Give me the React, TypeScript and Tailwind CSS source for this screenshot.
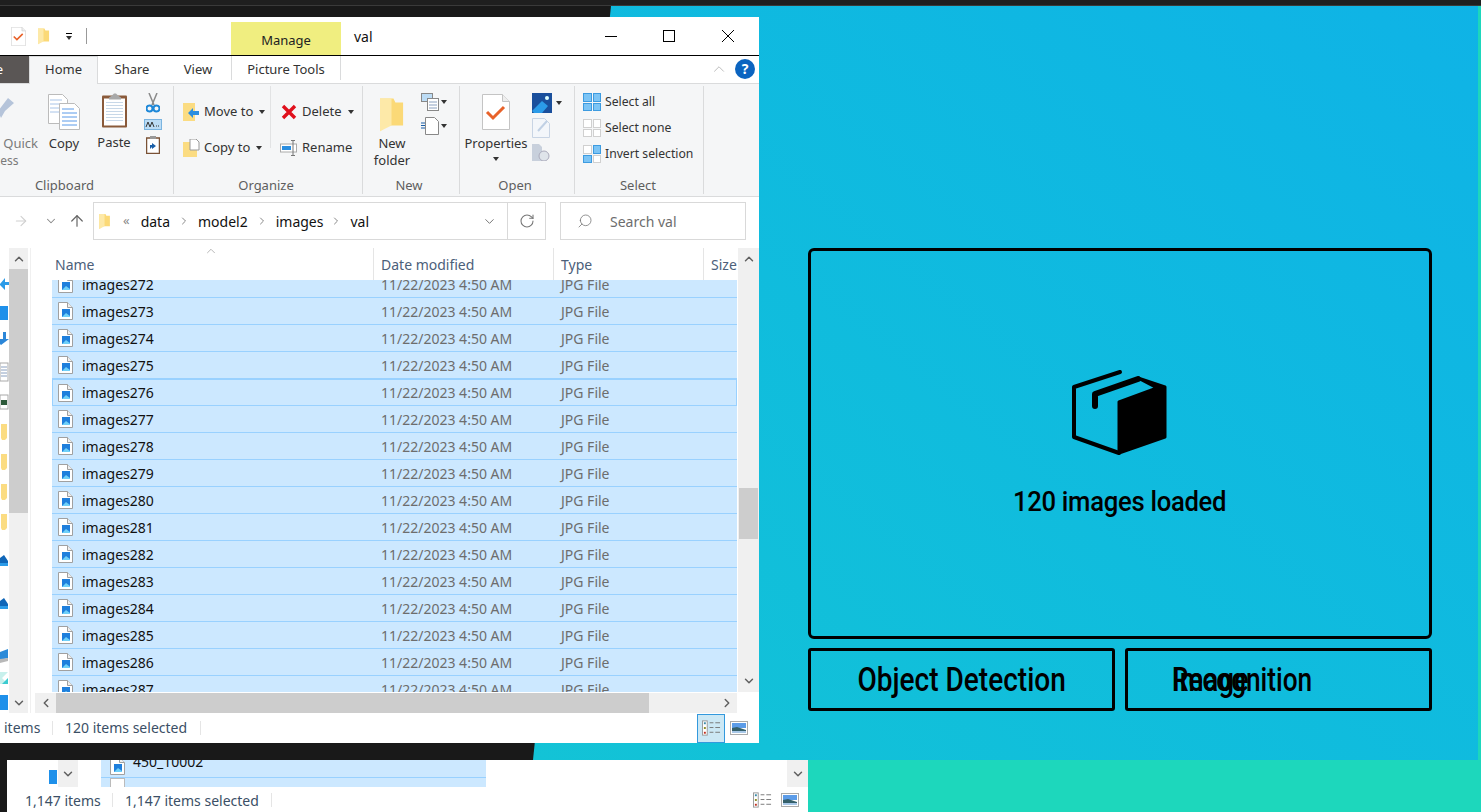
import type { ReactNode } from 'react';
import { ChevronDown, ChevronLeft, ChevronRight, ChevronUp, RotateCw, Search, ArrowUp, ArrowRight } from 'lucide-react';

const files = [272, 273, 274, 275, 276, 277, 278, 279, 280, 281, 282, 283, 284, 285, 286, 287];

function Caret() {
  return <span className="inline-block w-0 h-0 border-x-[3.5px] border-x-transparent border-t-[4px] border-t-[#333]" />;
}

function Folder({ className = '' }: { className?: string }) {
  return (
    <svg viewBox="0 0 13 18" className={className}>
      <path d="M0 1h7l1 2h4v12H4l-4 3z" fill="#fbd977" />
      <path d="M0 1h6v14l-6 3z" fill="#fde9a8" />
    </svg>
  );
}

function JpgIcon() {
  return (
    <svg viewBox="0 0 15 18" className="w-[15px] h-[18px] shrink-0">
      <path d="M.5.5h9l5 5v12H.5z" fill="#fff" stroke="#a0a0a0" />
      <path d="M9.5.5v5h5" fill="#eee" stroke="#a0a0a0" />
      <rect x="4" y="7" width="8" height="8" fill="#1f7fdc" />
      <path d="M4 15l4-4 4 3v1z" fill="#6fd0f8" />
    </svg>
  );
}

function DocCheck({ className = '' }: { className?: string }) {
  return (
    <svg viewBox="0 0 28 36" className={className}>
      <path d="M.5.5h20l7 7v28H.5z" fill="#fff" stroke="#c4c4c4" />
      <path d="M20.5.5v7h7" fill="#eee" stroke="#c4c4c4" />
      <path d="M5 18l6 6 11-11" fill="none" stroke="#e8622a" strokeWidth="3" />
    </svg>
  );
}

function DetailsIcon() {
  return (
    <svg viewBox="0 0 20 16" className="w-[19px] h-[16px]">
      <rect x=".5" y=".5" width="5" height="15" fill="#fff" stroke="#999" />
      <rect x="2" y="2" width="2" height="2" fill="#3a8aa8" />
      <rect x="2" y="7" width="2" height="2" fill="#8a8a20" />
      <rect x="2" y="12" width="2" height="2" fill="#c03020" />
      <path d="M8 2.5h4M14 2.5h5M8 7.5h4M14 7.5h5M8 12.5h4M14 12.5h5" stroke="#777" />
    </svg>
  );
}

function ThumbIcon() {
  return (
    <svg viewBox="0 0 18 14" className="w-[18px] h-[14px]">
      <rect x=".5" y=".5" width="17" height="13" fill="#fff" stroke="#aaa" />
      <rect x="2" y="2" width="14" height="5" fill="#5c9ce8" />
      <path d="M2 7l5-1 9 3v3H2z" fill="#35606a" />
      <rect x="2" y="10" width="14" height="2" fill="#a8c8e8" />
    </svg>
  );
}

function NavIcons() {
  return (
    <svg viewBox="0 0 9 462" className="w-[9px] h-[462px] shrink-0">
      <path d="M0 36l5-6v4h4v3H5v5l-5-5z" fill="#2b9be8" />
      <rect x="-4" y="58" width="12" height="14" fill="#1e90ea" />
      <path d="M6 84v7h3l-8 6-1-1v-5h3v-7z" fill="#2b86d8" />
      <rect x="0" y="115" width="8" height="18" fill="#fff" stroke="#aaa" />
      <path d="M1 119h6M1 122h6M1 125h6M1 128h6" stroke="#8aa0c0" />
      <rect x="0" y="147" width="8" height="14" fill="#fff" stroke="#aaa" />
      <rect x="1" y="152" width="6" height="5" fill="#2d5a3a" />
      {[176, 206, 236, 266].map(y => (
        <path key={y} d="M1 0h6v14l-2 2H2l-1-2z" transform={`translate(0 ${y})`} fill="#fbdc82" />
      ))}
      <path d="M0 310l4-3 4 6v2H0z" fill="#0f66b8" />
      <path d="M0 315h8v3H0z" fill="#2b9be8" />
      <path d="M0 353l4-3 4 6v2H0z" fill="#0f66b8" />
      <path d="M0 358h8v3H0z" fill="#2b9be8" />
      <path d="M0 404l8-3v9l-8 2z" fill="#2b8ad8" />
      <path d="M0 411l8-1v3l-8 2z" fill="#b8b8b8" />
      <path d="M0 424h8l-6 6 6 6H0z" fill="#c8f0ec" />
      <path d="M8 430v6H2z" fill="#3bcbd0" />
      <rect x="0" y="447" width="8" height="15" fill="#1e90ea" />
    </svg>
  );
}

function RibbonGroup({ label, width, labelClass = '', children }: { label: string; width: string; labelClass?: string; children: ReactNode }) {
  return (
    <div className={`${width} shrink-0 flex flex-col border-r border-[#dadbdc] my-[2px] overflow-hidden`}>
      <div className="flex-1 min-h-0 flex">{children}</div>
      <div className={`h-[18px] text-center text-[13px] leading-[18px] text-[#5e5e5e] ${labelClass}`}>{label}</div>
    </div>
  );
}

function SmallAction({ icon, label, caret }: { icon: ReactNode; label: string; caret?: boolean }) {
  return (
    <div className="h-[26px] shrink-0 flex items-center gap-[4px] text-[13px] text-[#333] whitespace-nowrap">
      {icon}
      <span>{label}</span>
      {caret && <span className="ml-[2px] flex"><Caret /></span>}
    </div>
  );
}

function GridIcon({ cells }: { cells: boolean[] }) {
  return (
    <span className="grid grid-cols-2 gap-[1px] w-[18px] h-[18px] shrink-0">
      {cells.map((on, i) => (
        <span key={i} className={on ? 'bg-[#7cc4f5] border border-[#3d9be0]' : 'bg-white border border-[#d0d0d0]'} />
      ))}
    </span>
  );
}

function SelectAction({ cells, label }: { cells: boolean[]; label: string }) {
  return (
    <div className="h-[26px] shrink-0 flex items-center gap-[4px] text-[12.2px] text-[#333] whitespace-nowrap">
      <GridIcon cells={cells} />
      <span>{label}</span>
    </div>
  );
}

function Ribbon() {
  return (
    <div className="h-[113px] shrink-0 bg-[#f5f6f7] border-b border-[#dadbdc] flex">
      <RibbonGroup label="Clipboard" width="w-[174px]" labelClass="pr-[44px]">
        <div className="w-[43px] shrink-0 overflow-hidden relative pt-[10px]">
          <svg viewBox="0 0 18 24" className="w-[18px] h-[24px] ml-[-2px] mb-[15px]">
            <path d="M0 15L10 2l6 5-9 8-4 7z" fill="#b5c4da" />
          </svg>
          <div className="text-[13px] leading-[17px] text-[#7a7a7a] text-right pr-[5px] whitespace-nowrap">Quick</div>
          <div className="text-[12px] leading-[17px] text-[#7a7a7a] absolute left-[-18px] top-[66px]">access</div>
        </div>
        <div className="w-[42px] shrink-0 flex flex-col items-center pt-[8px]">
          <svg viewBox="0 0 32 36" className="w-[32px] h-[36px] mb-[5px]">
            <path d="M.5.5h14l5 5v24H.5z" fill="#fff" stroke="#bbb" />
            <path d="M2 6h12M2 10h14M2 14h14M2 18h14" stroke="#a8c4e8" />
            <path d="M11.5 9.5h15l5 5v21h-20z" fill="#fff" stroke="#bbb" />
            <path d="M14 15h12M14 19h15M14 23h15M14 27h15M14 31h15" stroke="#5a9ae8" />
          </svg>
          <span className="text-[13px] leading-[17px] text-[#333]">Copy</span>
        </div>
        <div className="w-[58px] shrink-0 flex flex-col items-center pt-[6px]">
          <svg viewBox="0 0 27 36" className="w-[27px] h-[37px] mb-[5px]">
            <rect x="1" y="3" width="25" height="32" rx="1" fill="#8a5a3a" />
            <rect x="3" y="6" width="21" height="27" fill="#fff" />
            <path d="M5 10h17M5 13h17M5 16h17M5 19h17M5 22h17M5 25h17M5 28h17" stroke="#c8d8e8" />
            <path d="M8 5l3-2 2-2h2l2 2 3 2v2H8z" fill="#a8a8a8" />
          </svg>
          <span className="text-[13px] leading-[17px] text-[#333]">Paste</span>
        </div>
        <div className="w-[20px] shrink-0 flex flex-col items-center pt-[7px] gap-[6px]">
          <svg viewBox="0 0 14 20" className="w-[14px] h-[20px]">
            <path d="M3 0l5 12M11 0L6 12" stroke="#8a8a8a" strokeWidth="1.5" />
            <circle cx="3.5" cy="15.5" r="3" fill="none" stroke="#1e88d8" strokeWidth="2" />
            <circle cx="10.5" cy="15.5" r="3" fill="none" stroke="#1e88d8" strokeWidth="2" />
          </svg>
          <svg viewBox="0 0 18 11" className="w-[18px] h-[11px]">
            <rect x=".5" y=".5" width="17" height="10" fill="#bcdcf5" stroke="#7ab4e0" />
            <path d="M2 8l2-5 2 5 2-5 2 5" fill="none" stroke="#333" />
            <path d="M12 7h1M14 7h1" stroke="#333" />
          </svg>
          <svg viewBox="0 0 14 18" className="w-[14px] h-[18px]">
            <rect x=".5" y="2" width="13" height="15.5" fill="#fff" stroke="#7a5236" strokeWidth="1.5" />
            <rect x="4" y="0" width="6" height="3" fill="#999" />
            <path d="M4 13V9h2V7l4 3-4 3v-2z" fill="#1a5fa8" />
          </svg>
        </div>
      </RibbonGroup>

      <RibbonGroup label="Organize" width="w-[189px]" labelClass="pr-[4px]">
        <div className="flex flex-col pl-[9px] pt-[13px] w-[97px] shrink-0 gap-[10px]">
          <SmallAction
            label="Move to"
            caret
            icon={
              <svg viewBox="0 0 17 18" className="w-[17px] h-[18px] shrink-0">
                <path d="M0 0h12v18H0z" fill="#fbdc82" />
                <path d="M16 8h-6V5l-5 5 5 5v-3h6z" fill="#2b8ee0" />
              </svg>
            }
          />
          <SmallAction
            label="Copy to"
            caret
            icon={
              <svg viewBox="0 0 17 18" className="w-[17px] h-[18px] shrink-0">
                <path d="M0 3h14v15H0z" fill="#fbdc82" />
                <path d="M7 0h6l3 3v8H7z" fill="#fff" stroke="#999" />
              </svg>
            }
          />
        </div>
        <div className="flex flex-col pl-[9px] pt-[13px] gap-[10px] border-l border-[#e2e3e4] mb-[28px] ml-[-1px]">
          <SmallAction
            label="Delete"
            caret
            icon={
              <svg viewBox="0 0 18 16" className="w-[18px] h-[16px] shrink-0">
                <path d="M3 2l12 12M15 2L3 14" stroke="#e0101c" strokeWidth="3.4" />
              </svg>
            }
          />
          <SmallAction
            label="Rename"
            icon={
              <svg viewBox="0 0 18 16" className="w-[18px] h-[16px] shrink-0">
                <rect x=".5" y="4" width="16" height="8" fill="#fff" stroke="#aaa" />
                <rect x="2" y="6" width="9" height="4" fill="#2b8ee0" />
                <path d="M13 1v14M11 .5h4M11 15.5h4" stroke="#777" />
              </svg>
            }
          />
        </div>
      </RibbonGroup>

      <RibbonGroup label="New" width="w-[97px]" labelClass="pr-[4px]">
        <div className="w-[58px] shrink-0 flex flex-col items-center pt-[10px]">
          <Folder className="w-[25px] h-[36px] mb-[3px]" />
          <span className="text-[13px] leading-[17px] text-[#333] text-center">New<br />folder</span>
        </div>
        <div className="flex flex-col pt-[7px] gap-[6px]">
          <div className="flex items-center gap-[2px]">
            <svg viewBox="0 0 18 18" className="w-[18px] h-[18px]">
              <rect x=".5" y=".5" width="11" height="8" fill="#bcdcf5" stroke="#888" />
              <rect x="6.5" y="5.5" width="11" height="12" fill="#fff" stroke="#888" />
              <path d="M8 9h8M8 12h8M8 15h8" stroke="#8aa0c0" />
            </svg>
            <Caret />
          </div>
          <div className="flex items-center gap-[2px]">
            <svg viewBox="0 0 18 18" className="w-[18px] h-[18px]">
              <path d="M4.5.5h9l4 4v13h-13z" fill="#fff" stroke="#888" />
              <path d="M0 6h4M0 8.5h4M0 11h4" stroke="#1a5fa8" />
            </svg>
            <Caret />
          </div>
        </div>
      </RibbonGroup>

      <RibbonGroup label="Open" width="w-[115px]" labelClass="pr-[4px]">
        <div className="w-[72px] shrink-0 flex flex-col items-center pt-[8px]">
          <DocCheck className="w-[28px] h-[36px] mb-[5px]" />
          <span className="text-[13px] leading-[17px] text-[#333]">Properties</span>
          <span className="mt-[5px] flex"><Caret /></span>
        </div>
        <div className="flex flex-col pt-[7px] gap-[5px]">
          <div className="flex items-center gap-[4px]">
            <svg viewBox="0 0 20 20" className="w-[20px] h-[20px]">
              <rect width="20" height="20" fill="#1a4f9c" />
              <path d="M0 18l10-10 6 5-6 7H2z" fill="#2b9be8" />
              <circle cx="15" cy="5" r="2" fill="#dff" />
            </svg>
            <Caret />
          </div>
          <svg viewBox="0 0 18 20" className="w-[18px] h-[20px]">
            <path d="M.5.5h12l5 5v14H.5z" fill="#f3f6fa" stroke="#c8d4e4" />
            <path d="M6 13L15 3" stroke="#c0d0e4" strokeWidth="2" />
          </svg>
          <svg viewBox="0 0 18 18" className="w-[18px] h-[18px]">
            <path d="M0 1h7l3 3v14H0z" fill="#c8d0dc" />
            <circle cx="12" cy="13" r="5" fill="#dfe4ea" stroke="#aab" />
          </svg>
        </div>
      </RibbonGroup>

      <RibbonGroup label="Select" width="w-[129px]" labelClass="pr-[2px]">
        <div className="flex flex-col pl-[8px] pt-[3px]">
          <SelectAction label="Select all" cells={[true, true, true, true]} />
          <SelectAction label="Select none" cells={[false, false, false, false]} />
          <SelectAction label="Invert selection" cells={[false, true, true, false]} />
        </div>
      </RibbonGroup>
    </div>
  );
}

function Explorer() {
  return (
    <div className="absolute left-0 top-[17px] w-[759px] h-[726px] bg-white flex flex-col overflow-hidden font-['Noto_Sans',sans-serif] text-[13px]">
      {/* title bar */}
      <div className="h-[39px] shrink-0 border-b border-black flex items-center">
        <DocCheck className="w-[15px] h-[19px] ml-[11px]" />
        <Folder className="w-[12px] h-[18px] ml-[12px]" />
        <span className="ml-[16px] flex flex-col items-center gap-[2px]">
          <span className="w-[6px] h-px bg-black" />
          <Caret />
        </span>
        <span className="w-px h-[16px] bg-[#999] ml-[14px]" />
        <div className="self-end h-[33px] w-[110px] ml-[144px] bg-[#f0ee80] text-center text-[13px] leading-[36px] text-[#222]">Manage</div>
        <span className="ml-[13px] text-[14px] text-[#111]">val</span>
        <div className="ml-auto mr-[2px] flex items-center text-black">
          <div className="w-[58px] flex justify-center">
            <svg viewBox="0 0 12 12" className="w-[12px] h-[12px]"><path d="M0 6.5h12" stroke="currentColor" /></svg>
          </div>
          <div className="w-[58px] flex justify-center">
            <svg viewBox="0 0 12 12" className="w-[12px] h-[12px]"><rect x=".5" y=".5" width="11" height="11" fill="none" stroke="currentColor" /></svg>
          </div>
          <div className="w-[59px] flex justify-center">
            <svg viewBox="0 0 12 12" className="w-[12px] h-[12px]"><path d="M0 0l12 12M12 0L0 12" stroke="currentColor" /></svg>
          </div>
        </div>
      </div>

      {/* tabs */}
      <div className="h-[28px] shrink-0 flex border-b border-[#dadbdc]">
        <div className="w-[29px] bg-[#5a5655] text-white leading-[27px] overflow-hidden whitespace-nowrap flex justify-end pr-[26px]">File</div>
        <div className="w-[69px] h-[28px] bg-[#f5f6f7] border-x border-t border-[#dadbdc] text-center leading-[25px] text-[#333]">Home</div>
        <div className="w-[68px] text-center leading-[27px] text-[#333]">Share</div>
        <div className="w-[64px] text-center leading-[27px] text-[#333]">View</div>
        <div className="w-[110px] h-[24px] ml-px border-x border-[#dadbdc] text-center leading-[27px] text-[#333]">Picture Tools</div>
        <div className="ml-auto mr-[4px] flex items-start pt-[3px] gap-[7px]">
          <ChevronUp className="w-[18px] h-[20px] text-[#bbb]" strokeWidth={1.3} />
          <div className="w-[20px] h-[20px] rounded-full bg-[#0b64c0] text-white text-center text-[14px] font-bold leading-[20px]">?</div>
        </div>
      </div>

      <Ribbon />

      {/* address bar */}
      <div className="h-[51px] shrink-0 flex items-center pb-[3px]">
        <ArrowRight className="ml-[13px] w-[16px] h-[16px] text-[#d0d0d0]" strokeWidth={1.6} />
        <ChevronDown className="ml-[15px] w-[14px] h-[14px] text-[#888]" strokeWidth={1.8} />
        <ArrowUp className="ml-[10px] w-[18px] h-[18px] text-[#666]" strokeWidth={1.6} />
        <div className="ml-[7px] w-[453px] h-[38px] border border-[#d9d9d9] flex items-center text-[14px] text-[#111]">
          <Folder className="ml-[5px] w-[12px] h-[16px]" />
          <span className="ml-[12px] text-[#888] text-[13px]">«</span>
          <span className="ml-[11px]">data</span>
          <ChevronRight className="ml-[8px] w-[12px] h-[12px] text-[#888]" />
          <span className="ml-[8px]">model2</span>
          <ChevronRight className="ml-[8px] w-[12px] h-[12px] text-[#888]" />
          <span className="ml-[8px]">images</span>
          <ChevronRight className="ml-[7px] w-[12px] h-[12px] text-[#888]" />
          <span className="ml-[8px]">val</span>
          <ChevronDown className="ml-auto mr-[10px] w-[15px] h-[15px] text-[#777]" strokeWidth={1.6} />
          <div className="w-[38px] h-full border-l border-[#d9d9d9] flex items-center justify-center">
            <RotateCw className="w-[16px] h-[16px] text-[#777]" strokeWidth={1.6} />
          </div>
        </div>
        <div className="ml-[14px] w-[186px] h-[38px] border border-[#d9d9d9] flex items-center text-[14px] text-[#6d6d6d]">
          <Search className="ml-[16px] w-[16px] h-[16px] text-[#777] -scale-x-100" strokeWidth={1.2} />
          <span className="ml-[17px]">Search val</span>
        </div>
      </div>

      {/* body */}
      <div className="flex-1 min-h-0 flex">
        <div className="w-[9px] shrink-0 overflow-hidden">
          <NavIcons />
        </div>
        <div className="w-[19px] shrink-0 bg-[#f0f0f0] flex flex-col">
          <div className="h-[21px] flex items-center justify-center"><ChevronUp className="w-[14px] h-[14px] text-[#606060]" strokeWidth={2.5} /></div>
          <div className="h-[244px] bg-[#cdcdcd]" />
          <div className="flex-1" />
          <div className="h-[20px] flex items-center justify-center"><ChevronDown className="w-[14px] h-[14px] text-[#606060]" strokeWidth={2.5} /></div>
        </div>
        <div className="w-[2px] shrink-0 border-l border-[#f0f0f0] ml-[2px]" />

        <div className="flex-1 min-w-0 flex flex-col">
          <div className="flex-1 min-h-0 flex">
            <div className="flex-1 min-w-0 pl-[20px] pr-px flex flex-col">
              {/* column headers */}
              <div className="h-[32px] shrink-0 flex text-[14px] text-[#4c607a] leading-[34px] relative">
                <div className="w-[322px] pl-[3px] border-r border-[#e5e5e5]">Name</div>
                <div className="w-[180px] pl-[7px] border-r border-[#e5e5e5]">Date modified</div>
                <div className="w-[150px] pl-[7px] border-r border-[#e5e5e5]">Type</div>
                <div className="pl-[7px] overflow-hidden">Size</div>
                <ChevronUp className="absolute left-[151px] top-[-4px] w-[16px] h-[14px] text-[#999]" strokeWidth={1.2} />
              </div>
              {/* file rows */}
              <div className="flex-1 min-h-0 overflow-hidden">
                <div className="mt-[-9px]">
                  {files.map(n => (
                    <div
                      key={n}
                      className={`h-[27px] flex items-center bg-[#cce8ff] border-b border-[#99d1ff] text-[14px] ${n === 276 ? 'border border-[#99d1ff]' : ''}`}
                    >
                      <span className={n === 276 ? 'ml-[5px]' : 'ml-[6px]'}><JpgIcon /></span>
                      <span className="ml-[9px] w-[299px] text-[#111]">images{n}</span>
                      <span className="w-[180px] text-[#6d6d6d] whitespace-nowrap">11/22/2023 4:50 AM</span>
                      <span className="text-[#6d6d6d]">JPG File</span>
                    </div>
                  ))}
                </div>
              </div>
            </div>
            <div className="w-[21px] shrink-0 bg-[#f0f0f0] flex flex-col">
              <div className="h-[22px] flex items-center justify-center"><ChevronUp className="w-[14px] h-[14px] text-[#606060]" strokeWidth={2.5} /></div>
              <div className="h-[218px]" />
              <div className="h-[51px] bg-[#cdcdcd] mx-px" />
              <div className="flex-1" />
              <div className="h-[22px] flex items-center justify-center"><ChevronDown className="w-[14px] h-[14px] text-[#606060]" strokeWidth={2.5} /></div>
            </div>
          </div>
          {/* horizontal scrollbar */}
          <div className="h-[21px] shrink-0 flex pt-px pr-[22px] pl-[3px]">
            <div className="w-[21px] bg-[#f0f0f0] flex items-center justify-center"><ChevronLeft className="w-[14px] h-[14px] text-[#606060]" strokeWidth={2.5} /></div>
            <div className="w-[593px] bg-[#cdcdcd]" />
            <div className="flex-1 bg-[#f0f0f0] flex items-center justify-end pr-[3px]"><ChevronRight className="w-[14px] h-[14px] text-[#606060]" strokeWidth={2.5} /></div>
          </div>
        </div>
      </div>

      {/* status bar */}
      <div className="h-[30px] shrink-0 flex items-center text-[14px] text-[#3b4f66]">
        <span className="ml-[4px] w-[48px] pb-[2px]">items</span>
        <span className="w-px h-[14px] bg-[#e5e5e5]" />
        <span className="ml-[12px] w-[135px] pb-[2px]">120 items selected</span>
        <span className="w-px h-[14px] bg-[#e5e5e5]" />
        <div className="ml-auto w-[28px] h-[29px] bg-[#cce8f5] border border-[#3399dd] flex items-center justify-center">
          <DetailsIcon />
        </div>
        <span className="ml-[5px] mr-[11px] flex"><ThumbIcon /></span>
      </div>
    </div>
  );
}

function LowerExplorer() {
  return (
    <div className="absolute left-[7px] top-[760px] w-[801px] h-[52px] bg-white flex flex-col font-['Noto_Sans',sans-serif] text-[14px]">
      <div className="h-[27px] shrink-0 flex">
        <div className="w-[51px] flex items-start justify-end pt-[10px] pr-[1px]">
          <span className="w-[8px] h-[14px] bg-[#1e90ea]" />
        </div>
        <div className="w-[20px] bg-[#f0f0f0] flex items-center justify-center"><ChevronDown className="w-[14px] h-[14px] text-[#606060]" strokeWidth={2.5} /></div>
        <div className="w-[23px]" />
        <div className="w-[385px] overflow-hidden">
          <div className="h-[18px] bg-[#cce8ff] border-b border-[#99d1ff] flex pl-[9px] gap-[8px] text-[#111] overflow-hidden">
            <span className="mt-[-3px]"><JpgIcon /></span>
            <span className="mt-[-8px] leading-[20px]">450_10002</span>
          </div>
          <div className="h-[9px] bg-[#cce8ff] pl-[9px] overflow-hidden">
            <div className="w-[15px] h-[18px] bg-white border border-[#bbb]" />
          </div>
        </div>
        <div className="ml-auto w-[21px] bg-[#f0f0f0] flex items-center justify-center"><ChevronDown className="w-[14px] h-[14px] text-[#606060]" strokeWidth={2.5} /></div>
      </div>
      <div className="flex-1 flex items-center text-[#3b4f66]">
        <span className="ml-[18px] w-[87px] pt-[2px]">1,147 items</span>
        <span className="w-px h-[14px] bg-[#e5e5e5]" />
        <span className="ml-[12px] w-[146px] pt-[2px]">1,147 items selected</span>
        <span className="w-px h-[14px] bg-[#e5e5e5]" />
        <span className="ml-auto mr-[9px] flex items-center gap-[9px]"><DetailsIcon /><ThumbIcon /></span>
      </div>
    </div>
  );
}

function BoxIcon() {
  return (
    <svg viewBox="70 8 100 90" className="w-[100px] h-[90px]">
      <path d="M120 12L74 27v50l45 16" fill="none" stroke="#000" strokeWidth="4" strokeLinecap="round" strokeLinejoin="round" />
      <path d="M138 18l27 9v50l-46 16V42l38-14z" fill="#000" stroke="#000" strokeWidth="3" strokeLinejoin="round" />
      <path d="M138 19L95 34v12" fill="none" stroke="#000" strokeWidth="6" strokeLinejoin="round" strokeLinecap="round" />
    </svg>
  );
}

function AppPanel() {
  return (
    <div className="absolute left-[533px] top-[6px] w-[945px] h-[754px] bg-gradient-to-bl from-[#0fb3e6] to-[#13c3d6] [clip-path:polygon(78px_0,100%_0,100%_100%,0_100%)] pl-[275px] pr-[46px] pt-[242px] text-black font-['Roboto',sans-serif]">
      <div className="h-[391px] border-[3px] border-black rounded-[6px] flex flex-col items-center pt-[117px]">
        <BoxIcon />
        <div className="mt-[27px] text-[28px] leading-[34px] font-medium tracking-[-0.3px] scale-x-[0.915] whitespace-nowrap">120 images loaded</div>
      </div>
      <div className="mt-[9px] grid grid-cols-2 gap-[10px]">
        <div className="h-[63px] border-[3px] border-black rounded-[3px] flex items-center justify-center text-[33px] leading-none font-medium">
          <span className="scale-x-[0.85] whitespace-nowrap">Object Detection</span>
        </div>
        <div className="h-[63px] border-[3px] border-black rounded-[3px] flex items-center pl-[44px] text-[33px] leading-none font-medium relative">
          <span className="scale-x-[0.795] origin-left whitespace-nowrap">Recognition</span>
          <span className="absolute left-[44px] top-[12px] scale-x-[0.83] origin-left whitespace-nowrap">Image</span>
        </div>
      </div>
    </div>
  );
}

export default function App() {
  return (
    <div className="relative w-[1481px] h-[812px] overflow-hidden bg-[#191919]">
      <div className="h-[5px] bg-[#1f1f1f] border-b border-[#3a3a3a] box-content" />
      <div className="absolute left-[808px] right-0 top-[6px] bottom-0 bg-[#1dd7bc]" />
      <AppPanel />
      <Explorer />
      <LowerExplorer />
    </div>
  );
}
